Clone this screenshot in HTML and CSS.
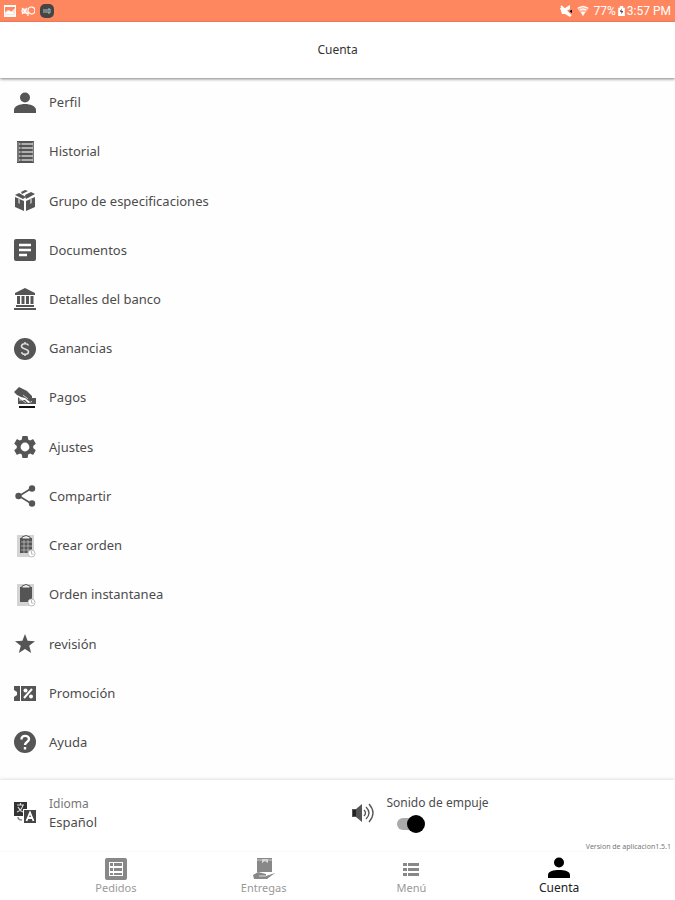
FILE: index.html
```html
<!DOCTYPE html>
<html lang="es">
<head>
  <meta charset="UTF-8" />
  <meta name="viewport" content="width=device-width, initial-scale=1.0"/>
  <title>Cuenta</title>
  <link rel="stylesheet" href="styles.css">
</head>
<body>
  <div class="status-bar">
    <div class="status-group">
      <svg class="status-icon" viewBox="0 0 12 12"><path fill="#fff" fill-rule="evenodd" d="M0 0h12v12H0zM1 2v8h10V2zM2 9l3-4 2 2 1-1 2 3z"/><path fill="#fff" opacity=".75" d="M1 7l3-2 3 2 4-4v7H1z"/></svg>
      <svg class="status-icon status-wide" viewBox="0 0 14 12"><g fill="none" stroke="#fff" stroke-width="1.2"><path d="M1 3l5 6M1 9l5-6M7 11V5a3.500 3.500 0 1 1 3 4L7 7"/><circle cx="3" cy="6" r="2"/></g></svg>
      <svg class="status-icon status-app" viewBox="0 0 14 14"><rect width="14" height="14" rx="5" fill="#454545"/><path d="M4 5v4M6 5v4M8 5h2v4H8z" stroke="#a7c5bd" fill="none"/></svg>
    </div>
    <div class="status-group status-right">
      <svg class="status-icon" viewBox="0 0 12 12"><path fill="#fff" d="M0 3h5l5-3v12L5 9H2z"/><path stroke="#ff875f" stroke-width="1.500" d="M12 4L8 6l4 3"/><path stroke="#fff" stroke-width="2" d="M1 1l10 10"/></svg>
      <svg class="status-icon status-wifi" viewBox="0 0 12 12"><path fill="#fff" opacity=".45" d="M0 3q6-5 12 0L6 11z"/><path fill="none" stroke="#fff" d="M1 3q5-3 10 0M3 5q3-2 6 0"/><path fill="#fff" d="M4 7h4l-2 4z"/></svg>
      <span>77%</span>
      <svg class="status-battery" viewBox="0 0 8 12"><path fill="#fff" d="M2 0h4v2h2v10H0V2h2z"/><path fill="#333" d="M4 3L2 7h2v3l2-4H4z"/></svg>
      <span>3:57 PM</span>
    </div>
  </div>

  <header class="header">
    <h1>Cuenta</h1>
  </header>

  <main class="menu">
    <a class="menu-item" href="#perfil">
      <svg class="icon" viewBox="0 0 22 22"><circle cx="11" cy="5.500" r="5"/><path d="M0 21v-3c0-4 6-6 11-6s11 2 11 6v3z"/></svg>
      <span>Perfil</span>
    </a>
    <a class="menu-item" href="#historial">
      <svg class="icon" viewBox="0 0 22 22"><path d="M3 0h17v22H3z"/><path d="M4 1v20M19 1v20" stroke="#999"/><path d="M5 3h14M5 7h14M5 11h14M5 15h14M5 19h14" stroke="#ccc" stroke-width="1.500"/><path d="M7 0v22" stroke="#555"/></svg>
      <span>Historial</span>
    </a>
    <a class="menu-item" href="#especificaciones">
      <svg class="icon" viewBox="0 0 22 22"><path d="M1 7l9 4v10l-9-4zM12 11l9-4v10l-9 4zM1 5l4-2 7 4-3 2zM7 2l4-2 3 1-6 3zM11 5l6-3 4 2-9 5z"/><path d="M4 8v5l2 1V9M16 9v5l2-1V8" fill="#aaa"/></svg>
      <span>Grupo de especificaciones</span>
    </a>
    <a class="menu-item" href="#documentos">
      <svg class="icon" viewBox="0 0 22 22"><rect width="22" height="22" rx="2"/><path d="M5 6h12M5 11h12M5 16h8" stroke="#fff" stroke-width="2.400"/></svg>
      <span>Documentos</span>
    </a>
    <a class="menu-item" href="#banco">
      <svg class="icon" viewBox="0 0 22 22"><path d="M11 0l10 5v2H1V5zM2 17h18v2H2zM0 20h22v2H0zM3 8h3v8H3zM7.500 8h3v8h-3zM12 8h3v8h-3zM16.500 8h3v8h-3z"/></svg>
      <span>Detalles del banco</span>
    </a>
    <a class="menu-item" href="#ganancias">
      <svg class="icon" viewBox="0 0 22 22"><circle cx="11" cy="11" r="11"/><path d="M14.500 7.500C13.500 5 7.500 5 7.500 8.200c0 3.300 7 2.300 7 5.600 0 3.200-6 3.200-7 .4M11 4v2M11 16v2" fill="none" stroke="#ddd" stroke-width="1.600"/></svg>
      <span>Ganancias</span>
    </a>
    <a class="menu-item" href="#pagos">
      <svg class="icon" viewBox="0 0 22 22"><path d="M0 5l5-5 8 4 5 5v5l-2 1-5-4-4-1-4-2zM4 10l3 3h4l3 3 4-1v-4h4v6H4z"/><path d="M5 13h3l4 3M9 8l5 4" fill="none" stroke="#ccc"/><path d="M5 19h16v2H5z" fill="#111"/></svg>
      <span>Pagos</span>
    </a>
    <a class="menu-item" href="#ajustes">
      <svg class="icon" viewBox="0 0 24 24"><path transform="translate(-2.400 -2.400) scale(1.200)" d="M19.430 12.980c.04-.32.07-.64.07-.98s-.03-.66-.07-.98l2.110-1.650c.19-.15.24-.42.12-.64l-2-3.460c-.12-.22-.39-.3-.61-.22l-2.490 1c-.52-.4-1.080-.73-1.690-.98l-.38-2.650A.49.49 0 0 0 14 2h-4c-.25 0-.46.18-.49.42l-.38 2.650c-.61.25-1.170.59-1.690.98l-2.490-1c-.23-.09-.49 0-.61.22l-2 3.460c-.13.22-.07.49.12.64l2.110 1.650c-.04.32-.07.65-.07.98s.03.66.07.98l-2.110 1.650c-.19.15-.24.42-.12.64l2 3.460c.12.22.39.3.61.22l2.490-1c.52.4 1.080.73 1.690.98l.38 2.650c.03.24.24.42.49.42h4c.25 0 .46-.18.49-.42l.38-2.650c.61-.25 1.170-.59 1.690-.98l2.490 1c.23.09.49 0 .61-.22l2-3.460c.12-.22.07-.49-.12-.64zM12 16a4 4 0 1 1 0-8 4 4 0 0 1 0 8z"/></svg>
      <span>Ajustes</span>
    </a>
    <a class="menu-item" href="#compartir">
      <svg class="icon" viewBox="0 0 22 22"><path d="M18 3L5 11l13 8" fill="none" stroke="#555" stroke-width="1.600"/><circle cx="18" cy="3.500" r="3.200"/><circle cx="4.500" cy="11" r="3.200"/><circle cx="18" cy="18.500" r="3.200"/></svg>
      <span>Compartir</span>
    </a>
    <a class="menu-item" href="#crear-orden">
      <svg class="icon" viewBox="0 0 22 22"><path d="M3 0h17v22H3z" fill="#d4d4d4"/><path d="M6 3h12v15H6z"/><path d="M7 7h11M7 11h11M7 15h11M10 5v13M14 5v13" stroke="#bbb" stroke-width=".8"/><path d="M8 2q4-3 8 0v2H8z" fill="#eee" stroke="#555"/><circle cx="17.500" cy="18.500" r="3.500" fill="#fff" stroke="#bbb"/><path d="M17.500 16v3h2" fill="none" stroke="#bbb"/></svg>
      <span>Crear orden</span>
    </a>
    <a class="menu-item" href="#orden-instantanea">
      <svg class="icon" viewBox="0 0 22 22"><path d="M3 0h17v22H3z" fill="#d4d4d4"/><path d="M6 3h12v12l-4 3H6z"/><path d="M8 2q4-3 8 0v2H8z" fill="#eee" stroke="#555"/><circle cx="17.500" cy="18.500" r="3.500" fill="#fff" stroke="#bbb"/><path d="M17.500 16v3h2" fill="none" stroke="#bbb"/></svg>
      <span>Orden instantanea</span>
    </a>
    <a class="menu-item" href="#revision">
      <svg class="icon" viewBox="0 0 22 22"><path d="M11 1l2.600 6.800 7.400.4-5.800 4.600 2 7.200-6.200-4-6.200 4 2-7.200L1 8.200l7.400-.4z"/></svg>
      <span>revisión</span>
    </a>
    <a class="menu-item" href="#promocion">
      <svg class="icon" viewBox="0 0 22 22"><path d="M0 4h6v15H0v-4l3-2v-3L0 8zM7 4h15v15H7z"/><path d="M18 7l-8 9" stroke="#fff" stroke-width="2"/><circle cx="11.500" cy="8.500" r="2" fill="#fff"/><circle cx="17" cy="14.500" r="2" fill="#fff"/></svg>
      <span>Promoción</span>
    </a>
    <a class="menu-item" href="#ayuda">
      <svg class="icon" viewBox="0 0 22 22"><circle cx="11" cy="11" r="11"/><path d="M7.500 8.500c0-5 7.500-4.500 7.500-.5 0 3-4 3-4 6" fill="none" stroke="#fff" stroke-width="2.400"/><path d="M9.800 16h2.400v2.500H9.800z" fill="#fff"/></svg>
      <span>Ayuda</span>
    </a>
  </main>

  <section class="settings">
    <button class="setting setting-language" type="button">
      <svg class="icon" viewBox="0 0 22 22"><path d="M0 0h13v7H9v7H0z" fill="#333"/><path d="M3 3h7M6.500 1v2M9 3q-1 5-6 7M4 5q2 4 5 5" fill="none" stroke="#ddd" stroke-width="1.200"/><path d="M10 8h12v13H10z" fill="#444"/><path d="M12.500 19L16 10.500l3.500 8.500M14 16h4" fill="none" stroke="#fff" stroke-width="1.800"/><path d="M4 15q0 3 4 3" fill="none" stroke="#888" stroke-width="1.500"/></svg>
      <span class="setting-text">
        <span class="setting-label">Idioma</span>
        <span>Español</span>
      </span>
    </button>
    <div class="setting setting-sound">
      <svg class="icon" viewBox="0 0 22 22"><path d="M0 7h4l6-5v18l-6-5H0z" fill="#555"/><path d="M1 8v6h3V8z" fill="#222"/><path d="M12 8q3 3 0 6M14 5q6 6 0 12M17 2q8 9 0 18" fill="none" stroke="#555" stroke-width="1.300"/></svg>
      <div class="setting-text">
        <label for="sonido">Sonido de empuje</label>
        <input class="switch" type="checkbox" id="sonido" checked>
      </div>
    </div>
    <p class="version">Version de aplicacion1.5.1</p>
  </section>

  <nav class="tabs">
    <a class="tab" href="#pedidos">
      <svg class="icon" viewBox="0 0 22 22"><rect width="22" height="22" rx="2"/><path d="M4 4h14v14H4z" fill="#fff"/><path d="M5 5h3v3H5zM9 5h8v3H9zM5 10h3v3H5zM9 10h8v3H9zM5 15h3v2H5zM9 15h8v2H9z"/></svg>
      <span>Pedidos</span>
    </a>
    <a class="tab" href="#entregas">
      <svg class="icon" viewBox="0 0 22 22"><path d="M4 0h15v14H4z"/><path d="M9 1v4l3-2 3 2V1z" fill="#ddd"/><path d="M4 2h15" stroke="#ccc"/><path d="M0 17l5-3 8 2v2l9-3-8 6H1z"/><path d="M6 18h7" stroke="#ddd"/></svg>
      <span>Entregas</span>
    </a>
    <a class="tab" href="#menu">
      <svg class="icon" viewBox="0 0 22 22"><path d="M3 5h4v3H3zM8 5h11v3H8zM3 10h4v3H3zM8 10h11v3H8zM3 15h4v3H3zM8 15h11v3H8z"/></svg>
      <span>Menú</span>
    </a>
    <a class="tab active" href="#cuenta">
      <svg class="icon" viewBox="0 0 22 22"><circle cx="11" cy="4.500" r="5"/><path d="M0 20v-3c0-4 6-5 11-5s11 1 11 5v3z"/></svg>
      <span>Cuenta</span>
    </a>
  </nav>
</body>
</html>
```
FILE: styles.css
```css
* {
  box-sizing: border-box;
}
body {
  margin: 0;
  min-height: 100vh;
  display: flex; flex-direction: column;
  background: #fefefe; color: #4c4c4c;
  font-family: "Noto Sans", "Open Sans", sans-serif;
  font-size: 12px; line-height: 19px;
}
a {
  color: inherit; text-decoration: none;
}
svg {
  display: block; flex-shrink: 0;
}
.icon {
  width: 22px; height: 22px;
  fill: #555;
  overflow: visible;
}

/* status bar */
.status-bar {
  display: flex; justify-content: space-between; align-items: center;
  height: 22px;
  padding: 0 4px;
  background: #ff875f; color: white;
  font-family: Roboto, sans-serif;
}
.status-group {
  display: flex; align-items: center;
  gap: 5px;
}
.status-right {
  gap: 2px;
}
.status-icon {
  width: 12px; height: 12px;
}
.status-wide {
  width: 14px;
}
.status-app {
  width: 14px; height: 14px;
}
.status-wifi {
  margin: 0 3px;
}
.status-battery {
  width: 7px; height: 10px;
}

.header {
  display: flex; align-items: center; justify-content: center;
  height: 56px;
  padding-bottom: 2px;
  background: white;
  box-shadow: 0 1px 3px rgba(0, 0, 0, 0.5);
}
.header h1 {
  margin: 0;
  color: #333;
  font-size: 12px; font-weight: normal;
}

/* account menu */
.menu {
  flex: 1;
  display: flex; flex-direction: column;
  padding-bottom: 13px;
  font-size: 13px;
}
.menu-item {
  flex: 1;
  display: flex; align-items: center;
  gap: 13px;
  padding: 0 14px;
}

.settings {
  position: relative;
  display: grid; grid-template-columns: 1fr 1fr;
  height: 71px;
  background: white;
  box-shadow: 0 -1px 3px rgba(0, 0, 0, 0.12);
}
.setting {
  display: flex; align-items: center;
  gap: 13px;
  padding: 0 14px 5px;
  border: none;
  background: none; color: inherit;
  font: inherit; text-align: left;
}
.setting-language {
  font-size: 13px;
}
.setting-text {
  display: flex; flex-direction: column;
}
.setting-label {
  color: #777;
  font-size: 12px;
}
.setting-sound .setting-text {
  gap: 2px;
}
.switch {
  appearance: none;
  display: flex; align-items: center; justify-content: flex-end;
  width: 26px; height: 12px;
  margin: 4px 10px;
  border-radius: 6px;
  background: #aaa;
}
.switch::before {
  content: "";
  width: 18px; height: 18px;
  flex-shrink: 0;
  margin-right: auto;
  border-radius: 50%;
  background: #777;
}
.switch:checked::before {
  margin-right: -2px;
  background: black;
}
.version {
  position: absolute; right: 4px; bottom: 0;
  margin: 0;
  color: #777;
  font-size: 7px; line-height: 9px;
}

/* bottom tabs */
.tabs {
  display: flex;
  height: 49px;
  padding: 7px 42px 0;
  background: white;
}
.tab {
  flex: 1;
  display: flex; flex-direction: column; align-items: center;
  color: #999;
  font-size: 11px; line-height: 15px;
}
.tab .icon {
  fill: #888;
}
.tab.active {
  color: #222;
  font-size: 12px;
}
.tab.active .icon {
  fill: black;
}
```
